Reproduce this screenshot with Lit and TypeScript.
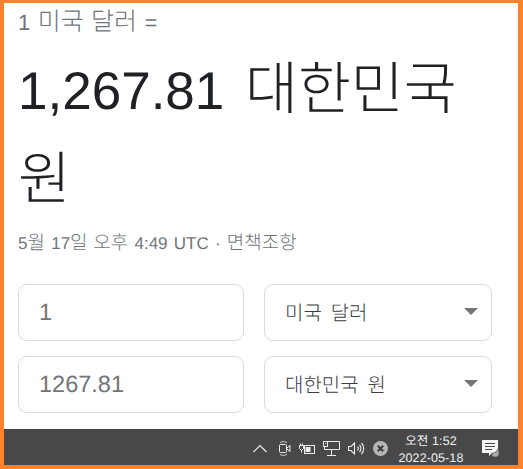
import { LitElement, html, css } from "lit";
import { customElement } from "lit/decorators.js";

const KO = `"Liberation Sans", Arial, "Noto Sans CJK KR", sans-serif`;

@customElement("app-root")
export class AppRoot extends LitElement {
  static styles = css`
    :host { display: block; width: 523px; height: 469px; font-family: ${css([KO] as any)}; text-rendering: geometricPrecision; }
    .frame { box-sizing: border-box; width: 523px; height: 469px; background: #fd8229; padding: 3px 5px 4px 4px; display: flex; flex-direction: column; }
    .page { flex: 1; background: #fff; padding: 0 26px 0 14px; display: flex; flex-direction: column; min-height: 0; overflow: hidden; }
    .ko { font-family: "Noto Sans CJK KR", sans-serif; font-weight: 300; white-space: nowrap; }
    .from { font-size: 22px; line-height: 28px; height: 28px; margin-top: 3px; color: #70757a; word-spacing: 1.500px; white-space: nowrap; }
    .from .ko { font-size: 25px; }
    .result { font-size: 53px; line-height: 82px; height: 164px; color: #202124; margin-top: 9px; width: 470px; word-spacing: 6px; }
    .result .ko { font-size: 57.500px; }
    .meta { font-size: 17px; line-height: 22px; color: #70757a; margin-top: 24px; white-space: nowrap; word-spacing: 1.500px; }
    .meta .ko { font-size: 19px; }
    .grid { display: grid; grid-template-columns: 226px 228px; column-gap: 20px; row-gap: 15px; margin-top: 29px; }
    .box { box-sizing: border-box; height: 57px; border: 1px solid #dadce0; border-radius: 9px; display: flex; align-items: center; padding: 0 20px; font-size: 23.500px; color: #70757a; }
    .sel { font-size: 20px; color: #3c4043; justify-content: space-between; padding: 0 13px 3px 20px; word-spacing: 4.500px; }
    .arrow { width: 0; height: 0; border-left: 7.500px solid transparent; border-right: 7.500px solid transparent; border-top: 7.500px solid #757575; margin-top: 1px; }
    .bar { height: 36px; flex: none; background: #484848; display: flex; align-items: center; justify-content: flex-end; color: #fff; }
    .bar svg { display: block; flex: none; }
    .tray { display: flex; align-items: center; gap: 8px; margin-top: 3px; }
    .clock { width: 76px; margin: 5px 0 0 5px; text-align: center; font-size: 12.500px; line-height: 17px; color: #f2f2f2; letter-spacing: 0.100px; }
    .notif { margin: 3px 19px 0 13px; }
  `;

  render() {
    return html`<div class="frame">
      <div class="page">
        <div class="from">1 <span class="ko">미국 달러</span> =</div>
        <div class="result">1,267.81 <span class="ko">대한민국</span> <span class="ko">원</span></div>
        <div class="meta">5<span class="ko">월</span> 17<span class="ko">일 오후</span> 4:49 UTC · <span class="ko">면책조항</span></div>
        <div class="grid">
          <div class="box">1</div>
          <div class="box sel"><span class="ko">미국 달러</span><i class="arrow"></i></div>
          <div class="box">1267.81</div>
          <div class="box sel"><span class="ko">대한민국 원</span><i class="arrow"></i></div>
        </div>
      </div>
      <div class="bar">
        <div class="tray">
          <svg width="14" height="9" viewBox="0 0 14 9" style="margin-right:3px" fill="none" stroke="#eee" stroke-width="1.200"><path d="M.5 8l6.500-6.500L13.500 8"/></svg>
          <svg width="13" height="17" viewBox="0 0 13 17" fill="none" stroke="#eee"><path d="M2 2.500Q5 .5 9 2.500M2 14.500Q5 16.500 9 14.500" stroke="#ccc"/><rect x="1.500" y="4.500" width="7" height="8" rx="1"/><path d="M9 8l3-2.500v6L9 9"/></svg>
          <svg width="16" height="11" viewBox="0 0 16 11" fill="none" stroke="#eee"><rect x="5.500" y="2.500" width="10" height="8"/><rect x="6.500" y="4" width="5" height="5" fill="#eee" stroke="none"/><path d="M.5 2.500h4v3l-2 2-2-2zM1.500.5v2M3.500.5v2M2.500 7.500v2"/></svg>
          <svg width="17" height="15" viewBox="0 0 17 15" fill="none" stroke="#eee"><path d="M4.500 .5h12v8h-15v-3"/><rect x=".5" y=".5" width="4" height="5" fill="#484848"/><path d="M4 14.500h9M8.500 8.500v6"/><path d="M2 2.500h1"/></svg>
          <svg width="17" height="13" viewBox="0 0 17 13" fill="none" stroke="#eee" stroke-width="1.100"><path d="M.5 4.500h2.500l3.500-3.500v11l-3.500-3.500H.5z"/><path d="M9.500 4.500a3 3 0 0 1 0 4M11.500 3a5 5 0 0 1 0 7M13.500 1a8 8 0 0 1 0 11"/></svg>
          <svg width="15" height="15" viewBox="0 0 15 15"><circle cx="7.500" cy="7.500" r="7.500" fill="#b5b5b5"/><path d="M4.800 4.800l5.400 5.400M10.200 4.800l-5.400 5.400" stroke="#3a3a3a" stroke-width="2"/></svg>
        </div>
        <div class="clock">오전 1:52<br />2022-05-18</div>
        <svg class="notif" width="17" height="18" viewBox="0 0 17 18"><path d="M0 0h16v13h-6l-3 3v-3H0z" fill="#f5f5f5"/><path d="M3 3.500h10M3 6.500h10M3 9.500h7" stroke="#484848"/><path d="M9 14l2 3 4 0 2-2v-4l-1-2-2 3z" fill="#aaa" stroke="#484848" stroke-width=".7"/></svg>
      </div>
    </div>`;
  }
}
